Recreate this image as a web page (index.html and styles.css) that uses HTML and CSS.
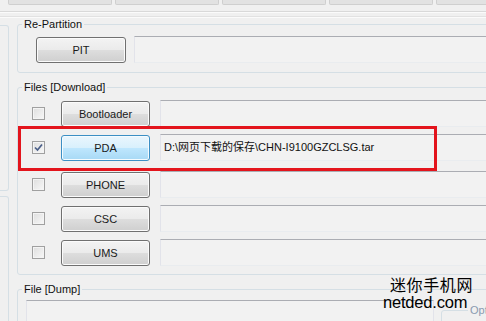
FILE: index.html
```html
<!DOCTYPE html>
<html>
<head>
    <title>Odin3 Downloader</title>
    <link rel="stylesheet" href="styles.css">
</head>
<body>
    <div class="window">
        <div class="tab-strip">
            <div class="tab-cell"></div>
            <div class="tab-cell"></div>
            <div class="tab-cell"></div>
            <div class="tab-cell"></div>
            <div class="tab-cell"></div>
        </div>
        <div class="rule rule-top"></div>
        <div class="rule rule-second"></div>

        <div class="main">
            <div class="side">
                <div class="side-box side-box-upper"></div>
                <div class="side-box side-box-lower"></div>
            </div>

            <div class="content">
                <fieldset class="group group-partition">
                    <legend>Re-Partition</legend>
                    <div class="pit-row">
                        <div class="btn btn-pit">PIT</div>
                        <div class="field"></div>
                    </div>
                </fieldset>

                <fieldset class="group group-download">
                    <legend>Files [Download]</legend>

                    <div class="file-row">
                        <span class="check"></span>
                        <div class="btn">Bootloader</div>
                        <div class="field"></div>
                    </div>

                    <div class="file-row">
                        <span class="check check-on">
                            <svg width="11" height="11" viewBox="0 0 11 11">
                                <path d="M2 5.5 L4.5 8 L9 2.5" fill="none" stroke="#4b5f88" stroke-width="1.7"/>
                            </svg>
                        </span>
                        <div class="btn btn-active">PDA</div>
                        <div class="field">D:\网页下载的保存\CHN-I9100GZCLSG.tar</div>
                    </div>

                    <div class="file-row file-row-spaced">
                        <span class="check"></span>
                        <div class="btn">PHONE</div>
                        <div class="field"></div>
                    </div>

                    <div class="file-row">
                        <span class="check"></span>
                        <div class="btn">CSC</div>
                        <div class="field"></div>
                    </div>

                    <div class="file-row">
                        <span class="check"></span>
                        <div class="btn">UMS</div>
                        <div class="field"></div>
                    </div>
                </fieldset>

                <fieldset class="group group-dump">
                    <legend>File [Dump]</legend>
                    <div class="dump-row">
                        <div class="field field-dump"></div>
                        <fieldset class="group group-option">
                            <legend>Option</legend>
                        </fieldset>
                    </div>
                </fieldset>
            </div>
        </div>

        <!-- annotation drawn over the PDA row -->
        <div class="highlight"></div>

        <div class="watermark">
            <div class="watermark-cn">迷你手机网</div>
            <div class="watermark-en">netded.com</div>
        </div>
    </div>
</body>
</html>
```

FILE: styles.css
```css
html, body {
    margin: 0;
    padding: 0;
}

body {
    background-color: #f0f0f0;
    font-family: "Liberation Sans", "Noto Sans CJK SC", sans-serif;
    font-size: 11px;
    color: #111;
}

.window {
    position: relative;
    width: 486px;
    height: 321px;
    overflow: hidden;
}

/* bottoms of the buttons cut off above */
.tab-strip {
    display: flex;
    gap: 3px;
    padding-left: 8px;
    height: 5px;
}

.tab-cell {
    flex: 0 0 102px;
    height: 4px;
    background-color: #e2e2e2;
    border: 1px solid #cfcfcf;
    border-top: none;
    border-radius: 0 0 2px 2px;
}

.rule {
    height: 1px;
    background-color: #d9d9d9;
    border-bottom: 1px solid #fbfbfb;
}

.rule-top {
    margin-top: 6px;
}

.rule-second {
    margin-top: 3px;
    background-color: #e2e2e2;
}

.main {
    display: flex;
}

.side {
    flex: 0 0 9px;
    display: flex;
    flex-direction: column;
    gap: 5px;
}

.side-box {
    border: 1px solid #d5dfe5;
    border-left: none;
    border-radius: 0 3px 3px 0;
}

.side-box-upper {
    margin-top: 7px;
    height: 164px;
}

.side-box-lower {
    height: 140px;
}

.content {
    margin-left: 8px;
    width: 520px;
    flex: 0 0 520px;
}

.group {
    margin: 0;
    padding: 0 0 0 4px;
    border: 1px solid #d5dfe5;
    border-radius: 3px;
    min-width: 0;
}

.group legend {
    padding: 0 2px;
    line-height: 13px;
    font-size: 11px;
}

.group-partition {
    padding-bottom: 9px;
}

.group-download {
    margin-top: 8px;
    padding-bottom: 8px;
}

.group-dump {
    margin-top: 8px;
}

.pit-row {
    display: flex;
    align-items: flex-start;
    margin-top: 5px;
    height: 27px;
}

.file-row {
    display: flex;
    align-items: center;
    height: 27px;
    margin-top: 7px;
}

.group-download legend + .file-row {
    margin-top: 6px;
}

.file-row-spaced {
    margin-top: 10px;
}

.btn {
    box-sizing: border-box;
    height: 26px;
    display: flex;
    align-items: center;
    justify-content: center;
    border: 1px solid #707070;
    border-radius: 3px;
    background: linear-gradient(#f3f3f3 0%, #ebebeb 48%, #dddddd 52%, #cfcfcf 100%);
    box-shadow: inset 0 0 0 1px #fbfbfb;
    color: #1a1a1a;
    flex: 0 0 89px;
    margin-left: 16px;
}

.btn-pit {
    flex-basis: 90px;
    margin-left: 14px;
    margin-top: 1px;
}

.btn-active {
    border-color: #3c8fc4;
    background: linear-gradient(#eaf6fd 0%, #d9f0fc 48%, #bee6fd 52%, #a7d9f5 100%);
    box-shadow: inset 0 0 0 1px #f4fbff;
}

.check {
    box-sizing: border-box;
    flex: 0 0 13px;
    height: 13px;
    margin-left: 10px;
    border: 1px solid #a0a0a0;
    background: linear-gradient(135deg, #dedede, #f8f8f8);
    box-shadow: inset 0 0 0 1px #f4f4f4;
    display: flex;
    align-items: center;
    justify-content: center;
}

.field {
    box-sizing: border-box;
    flex: 1;
    height: 27px;
    margin-left: 10px;
    padding: 5px 0 0 3px;
    line-height: 14px;
    white-space: nowrap;
    background-color: #f2f2f2;
    border: 1px solid #e2e3ea;
    border-top-color: #abadb3;
    border-bottom-color: #e9ecef;
}

.pit-row .field {
    margin-left: 8px;
}

.dump-row {
    display: flex;
    align-items: flex-start;
    margin-top: 4px;
    height: 40px;
}

.field-dump {
    flex: 0 0 408px;
    height: 40px;
    margin-left: 4px;
}

.group-option {
    flex: 1;
    margin-left: 7px;
    margin-top: 4px;
    padding-left: 26px;
    height: 40px;
}

.group-option legend {
    color: #8a9bb0;
}

.highlight {
    position: absolute;
    left: 18px;
    top: 126px;
    width: 413px;
    height: 39px;
    border: 3px solid #e3141c;
}

.watermark {
    position: absolute;
    left: 383px;
    top: 275px;
    color: #000;
}

.watermark-cn {
    margin-left: 7px;
    font-family: "Noto Sans CJK SC", sans-serif;
    font-size: 16px;
    line-height: 18px;
    letter-spacing: 0.6px;
}

.watermark-en {
    font-family: "Liberation Sans", sans-serif;
    font-size: 16.5px;
    line-height: 19px;
    letter-spacing: -0.2px;
}
```
